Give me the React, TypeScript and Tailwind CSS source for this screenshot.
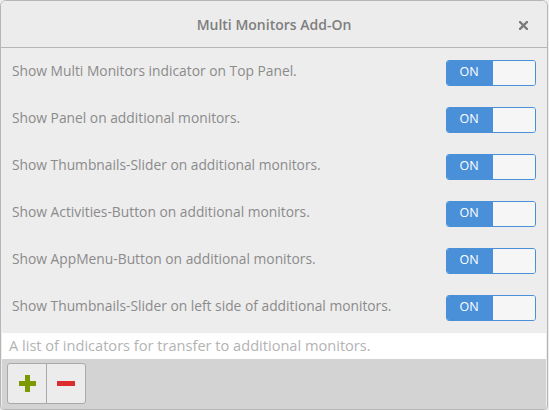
import React from "react";

const rows = [
  "Show Multi Monitors indicator on Top Panel.",
  "Show Panel on additional monitors.",
  "Show Thumbnails-Slider on additional monitors.",
  "Show Activities-Button on additional monitors.",
  "Show AppMenu-Button on additional monitors.",
  "Show Thumbnails-Slider on left side of additional monitors.",
];

function Switch() {
  return (
    <div className="mt-[2px] flex h-[26px] w-[90px] overflow-hidden rounded-[3px] border border-[#4a90d9]">
      <div className="flex w-[46px] items-center justify-center pr-[2px] bg-[#4a90d9] text-[12.5px] text-white">ON</div>
      <div className="flex-1 bg-[#f6f6f6]" />
    </div>
  );
}

export default function App() {
  return (
    <div className="h-[410px] w-[549px] bg-[#ededed]" style={{ fontFamily: '"Open Sans", sans-serif' }}>
      <div className="flex h-[410px] w-[548px] flex-col overflow-hidden rounded-t-[6px] rounded-b-[4px] border border-[#b6b6b6] bg-[#ededed]">
        <div className="relative flex h-[47px] shrink-0 items-center justify-center border-b border-[#b6b6b6] bg-[#ececec]">
          <span className="text-[14px] font-semibold text-[#7e7e7e]">Multi Monitors Add-On</span>
          <svg className="absolute right-[19px] top-[20px]" width="9" height="9" viewBox="0 0 9 9">
            <path d="M1 1L8 8M8 1L1 8" stroke="#7b7b7b" strokeWidth="2.4" strokeLinecap="square" />
          </svg>
        </div>
        <div className="flex flex-col">
          {rows.map((r) => (
            <div key={r} className="flex h-[47px] items-center justify-between pl-[11px] pr-[11px]">
              <span className="text-[13.8px] text-[#8b8b8b]">{r}</span>
              <Switch />
            </div>
          ))}
        </div>
        <div className="mx-[1px] mt-[3px] flex h-[26px] items-center bg-white pl-[7px] text-[14.6px] text-[#b3b3b3]">
          A list of indicators for transfer to additional monitors.
        </div>
        <div className="mx-[1px] flex flex-1 items-start bg-[#d3d3d3] pl-[5px] pt-[4px]">
          <div className="flex h-[41px] overflow-hidden rounded-[3px] border border-[#a9a9a9] bg-[#ececec]">
            <div className="flex w-[39px] items-center justify-center border-r border-[#a9a9a9]">
              <svg width="17" height="17" viewBox="0 0 17 17">
                <path d="M6 0h5v6h6v5h-6v6H6v-6H0V6h6z" fill="#7c9a00" />
              </svg>
            </div>
            <div className="flex w-[38px] items-center justify-center">
              <svg width="18" height="5" viewBox="0 0 18 5">
                <rect width="18" height="5" fill="#db2d2d" />
              </svg>
            </div>
          </div>
        </div>
      </div>
    </div>
  );
}
